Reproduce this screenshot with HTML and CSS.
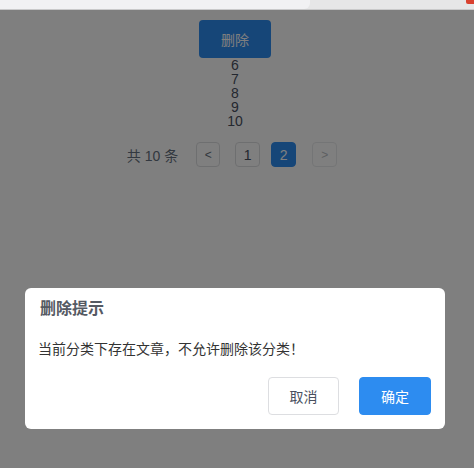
FILE: index.html
```html
<!DOCTYPE html>
<html lang="zh-CN">
<head>
<meta charset="utf-8">
<title>删除提示</title>
<link rel="stylesheet" href="styles.css">
</head>
<body>
<div class="chrome">
  <div class="chrome-field"></div>
  <div class="chrome-badge"></div>
</div>
<div class="main">
  <button class="btn-primary">删除</button>
  <ul class="list">
    <li>6</li>
    <li>7</li>
    <li>8</li>
    <li>9</li>
    <li>10</li>
  </ul>
  <div class="pager">
    <span class="pager-total">共 10 条</span>
    <span class="pager-item pager-prev">&lt;</span>
    <span class="pager-item pager-one">1</span>
    <span class="pager-item pager-active">2</span>
    <span class="pager-item pager-next">&gt;</span>
  </div>
</div>
<div class="mask"></div>
<div class="modal">
  <div class="modal-header">删除提示</div>
  <div class="modal-body">当前分类下存在文章，不允许删除该分类！</div>
  <div class="modal-footer">
    <button class="btn btn-cancel">取消</button>
    <button class="btn btn-ok">确定</button>
  </div>
</div>
</body>
</html>
```

FILE: styles.css
```css
html, body {
  margin: 0;
  padding: 0;
  background: #ffffff;
  font-family: "Liberation Sans", "Noto Sans CJK SC", sans-serif;
  color: #495060;
  width: 474px;
  height: 468px;
  overflow: hidden;
}

.chrome {
  height: 9px;
  background: #e6e6e7;
  border-bottom: 1px solid #c9c9ca;
  display: flex;
  position: relative;
  z-index: 20;
}

.chrome-field {
  width: 310px;
  background: #f1f1f3;
  border-bottom-right-radius: 6px;
}

.chrome-badge {
  position: absolute;
  right: 0;
  top: 0;
  width: 8px;
  height: 4px;
  background: #d9412f;
  border-bottom-left-radius: 2px;
}

.main {
  display: flex;
  flex-direction: column;
  align-items: center;
  padding-right: 4px;
}

.btn-primary {
  margin-top: 10px;
  width: 72px;
  height: 38px;
  border: none;
  border-radius: 4px;
  background: #2d8cf0;
  color: #ffffff;
  font-family: "Liberation Sans", "Noto Sans CJK SC", sans-serif;
  font-size: 14px;
  padding: 0;
}

.list {
  list-style: none;
  margin: 0;
  padding: 0;
  text-align: center;
  font-size: 14px;
  line-height: 14px;
  color: #495060;
}

.pager {
  margin-top: 14px;
  display: flex;
  align-items: center;
  padding-right: 6px;
  font-size: 14px;
}

.pager-total {
  margin-right: 18px;
  color: #657180;
}

.pager-item {
  box-sizing: border-box;
  height: 25px;
  width: 25px;
  border: 1px solid #dddee1;
  border-radius: 4px;
  display: flex;
  align-items: center;
  justify-content: center;
  background: #ffffff;
  color: #495060;
  font-size: 14px;
}

.pager-prev {
  width: 24px;
  margin-right: 15px;
  font-size: 12px;
  color: #657180;
}

.pager-one {
  margin-right: 11px;
}

.pager-active {
  margin-right: 16px;
  background: #2d8cf0;
  border-color: #2d8cf0;
  color: #ffffff;
}

.pager-next {
  color: #bbbec4;
  border-color: #e9eaec;
  font-size: 12px;
}

.mask {
  position: fixed;
  left: 0;
  right: 0;
  top: 10px;
  bottom: 0;
  background: rgba(0, 0, 0, 0.5);
  z-index: 10;
}

.modal {
  position: fixed;
  left: 25px;
  top: 288px;
  width: 420px;
  height: 141px;
  box-sizing: border-box;
  background: #ffffff;
  border-radius: 6px;
  z-index: 11;
  display: flex;
  flex-direction: column;
}

.modal-header {
  padding: 10px 0 0 15px;
  height: 22px;
  line-height: 22px;
  font-size: 16px;
  font-weight: bold;
  color: #555a63;
}

.modal-body {
  margin-top: 19px;
  padding-left: 13px;
  height: 20px;
  line-height: 20px;
  font-size: 14px;
  color: #333333;
}

.modal-footer {
  margin-top: 18px;
  display: flex;
  justify-content: flex-end;
  gap: 20px;
  padding-right: 14px;
}

.btn {
  width: 72px;
  height: 38px;
  box-sizing: border-box;
  border-radius: 4px;
  font-family: "Liberation Sans", "Noto Sans CJK SC", sans-serif;
  font-size: 14px;
  padding: 0;
}

.btn-cancel {
  width: 71px;
  background: #ffffff;
  border: 1px solid #dddee1;
  color: #495060;
}

.btn-ok {
  background: #2d8cf0;
  border: 1px solid #2d8cf0;
  color: #ffffff;
}
```
